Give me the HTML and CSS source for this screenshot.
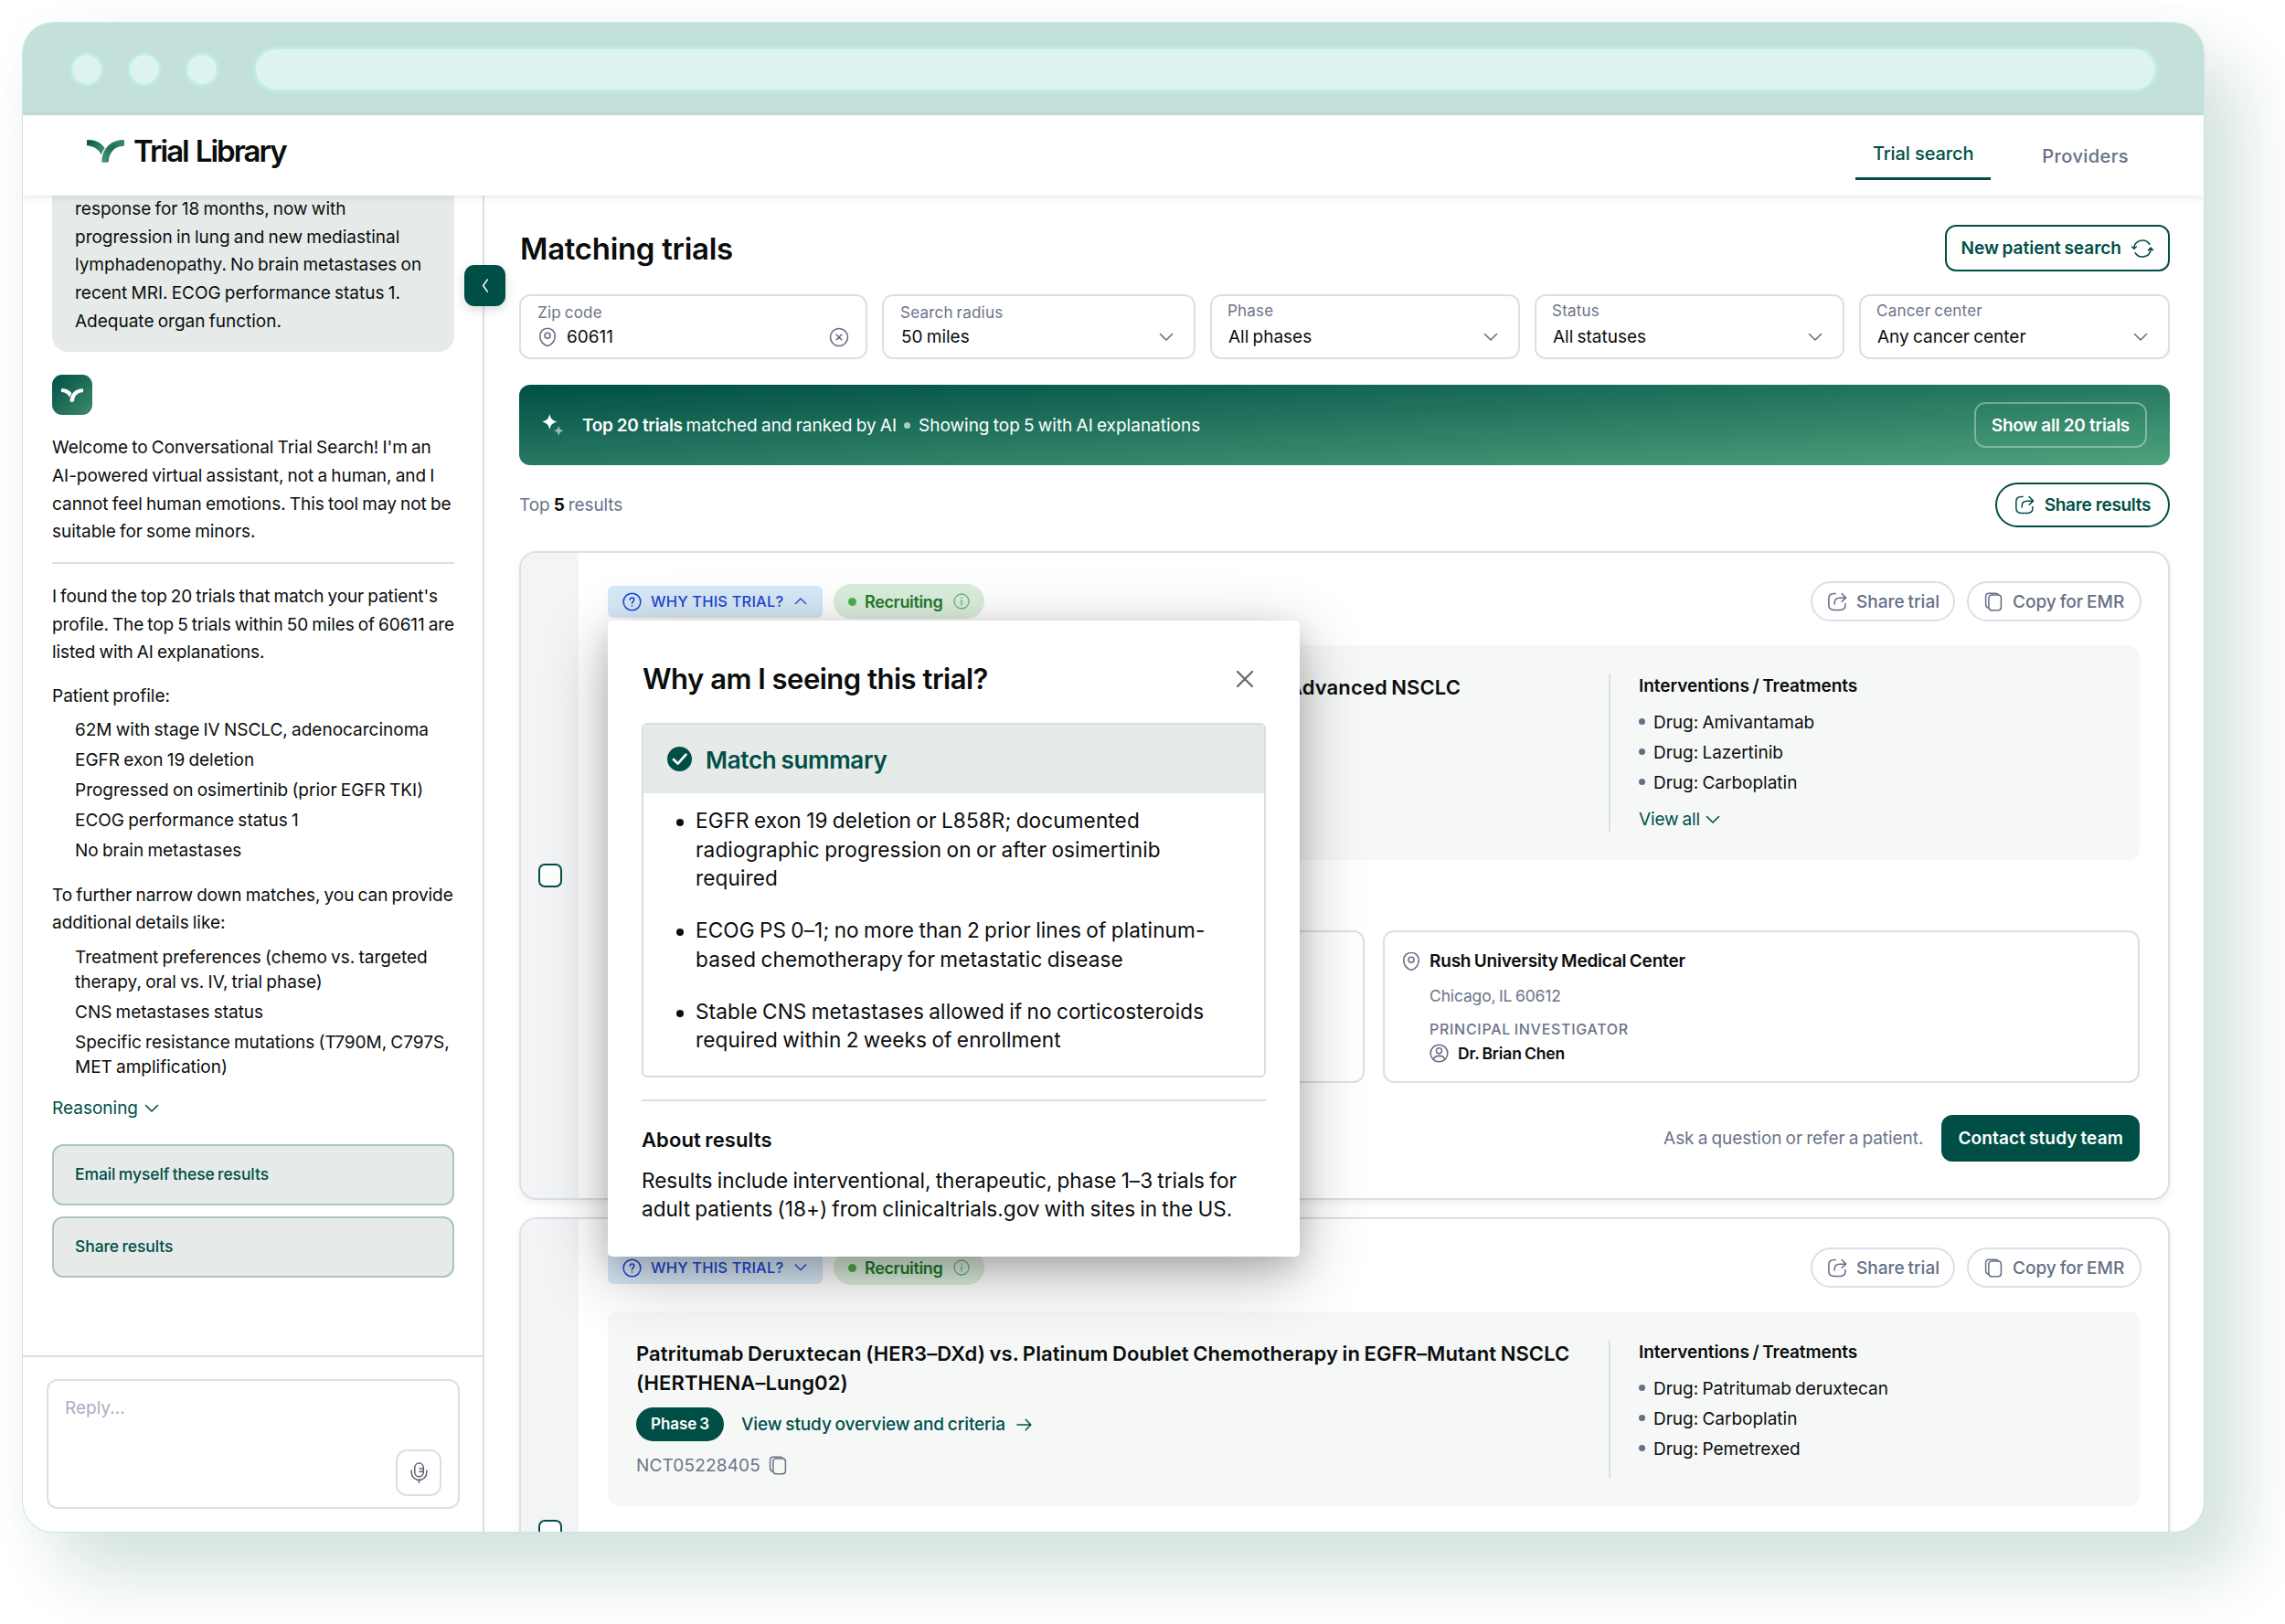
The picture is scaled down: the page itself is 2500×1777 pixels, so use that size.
FILE: index.html
```
<!DOCTYPE html>
<html lang="en">
    <head>
        <meta charset="UTF-8">
        <meta name="viewport" content="width=device-width, initial-scale=1.0">
        <title>Trial Library</title>
        <link rel="stylesheet" href="styles.css">
    </head>

    <body>
        <!-- Icon sprite -->
        <svg class="sprite" aria-hidden="true">
            <linearGradient id="leafLeft" x1="0" y1="0" x2="1" y2="1">
                <stop offset="0" stop-color="#004f46"/>
                <stop offset="1" stop-color="#4ea27c"/>
            </linearGradient>
            <linearGradient id="leafRight" x1="0" y1="1" x2="1" y2="0">
                <stop offset="0" stop-color="#4a9d78"/>
                <stop offset="0.55" stop-color="#1f6c58"/>
                <stop offset="1" stop-color="#3f8f6f"/>
            </linearGradient>
            <symbol id="leaf-a" viewBox="0 0 41 25"><path d="M1 0C9 0 16 3 19.6 9.3C18 11.5 16.6 13.8 15.6 16.4C12.8 10.4 8 7.2 1 6.6Q0 6.5 0 5.6V1Q0 0 1 0Z"/></symbol>
            <symbol id="leaf-b" viewBox="0 0 41 25"><path d="M40 0C27 0 17 9 16.3 23.6Q16.3 24.8 17.4 24.8H22.6Q23.7 24.8 23.8 23.7C24.6 13.4 30.5 7.2 40 6.8Q41 6.7 41 5.8V1Q41 0 40 0Z"/></symbol>
            <symbol id="chevron-down" viewBox="0 0 16 16"><path d="M1.5 4.5L8 11L14.5 4.5"/></symbol>
            <symbol id="chevron-up" viewBox="0 0 16 16"><path d="M1.5 11L8 4.5L14.5 11"/></symbol>
            <symbol id="chevron-left" viewBox="0 0 16 16"><path d="M10.5 1L5.5 8L10.5 15"/></symbol>
            <symbol id="pin" viewBox="0 0 20 22"><path d="M10 1.2C5.2 1.2 1.8 4.9 1.8 9.4C1.8 14 4.6 18 8.2 19.9Q10 20.9 11.8 19.9C15.4 18 18.2 14 18.2 9.4C18.2 4.9 14.8 1.2 10 1.2Z"/><circle cx="10" cy="9.2" r="3"/></symbol>
            <symbol id="clear" viewBox="0 0 22 22"><circle cx="11" cy="11" r="9.5"/><path d="M8.2 8.2L13.8 13.8M13.8 8.2L8.2 13.8"/></symbol>
            <symbol id="refresh" viewBox="0 0 24 24"><path d="M2.8 11.2A9.3 9.3 0 0 1 19.8 7.2M21.2 12.8A9.3 9.3 0 0 1 4.2 16.8M.6 10L2.8 12.2L5.4 10M18.6 13.6L21.2 11.2L23.4 13.6"/></symbol>
            <symbol id="share" viewBox="0 0 22 22"><path d="M9 1.6H7.5Q1.4 1.6 1.4 7.5V14.5Q1.4 20.4 7.5 20.4H14.5Q20.4 20.4 20.4 14.5V13M8 13.5V12.5Q8 6.5 14 6.5H20.6M16.4 1.6L21 6.4L16.4 10.8"/></symbol>
            <symbol id="copy" viewBox="0 0 20 22"><rect x="4.6" y="3.2" width="14.2" height="17.6" rx="3.4"/><path d="M4.6 18C2.4 17.7 1.2 16.4 1.2 14.2V5Q1.2 1.2 5 1.2H12.4Q15.2 1.2 15.8 3.2"/></symbol>
            <symbol id="question" viewBox="0 0 22 22"><circle cx="11" cy="11" r="9.8"/><path d="M8.6 8.6C8.6 5.4 13.4 5.5 13.4 8.6C13.4 10.6 11 10.6 11 12.9M11 15.4V15.8"/></symbol>
            <symbol id="info" viewBox="0 0 18 18"><circle cx="9" cy="9" r="8"/><path d="M9 8V13M9 5V5.6"/></symbol>
            <symbol id="user" viewBox="0 0 22 22"><circle cx="11" cy="11" r="9.8"/><circle cx="11" cy="8.2" r="3.2"/><path d="M4.8 18.2C5 12.6 17 12.6 17.2 18.2"/></symbol>
            <symbol id="mic" viewBox="0 0 20 24"><rect x="5" y="1" width="10" height="15.5" rx="5"/><path d="M1.2 9.5V11.5A8.8 8.8 0 0 0 18.8 11.5V9.5M10 20.3V23.4M15 7.2H10.6M15 10.8H10.6"/></symbol>
            <symbol id="arrow" viewBox="0 0 18 14"><path d="M1 7H16.6M10.8 1L16.8 7L10.8 13"/></symbol>
            <symbol id="close" viewBox="0 0 18 18"><path d="M1 1L17 17M17 1L1 17"/></symbol>
        </svg>

        <div class="window">
            <div class="titlebar">
                <span class="dot"></span>
                <span class="dot"></span>
                <span class="dot"></span>
                <span class="address"></span>
            </div>

            <header class="header">
                <div class="brand">
                    <svg class="brand-mark"><use href="#leaf-a" fill="url(#leafLeft)"/><use href="#leaf-b" fill="url(#leafRight)"/></svg>
                    <span>Trial Library</span>
                </div>
                <nav class="nav">
                    <a class="nav-link active">Trial search</a>
                    <a class="nav-link">Providers</a>
                </nav>
            </header>

            <div class="body">
                <aside class="sidebar">
                    <div class="chat">
                        <div class="bubble">response for 18 months, now with<br>progression in lung and new mediastinal<br>lymphadenopathy. No brain metastases on<br>recent MRI. ECOG performance status 1.<br>Adequate organ function.</div>
                        <div class="bot"><svg class="bot-mark"><use href="#leaf-a"/><use href="#leaf-b"/></svg></div>
                        <p class="welcome">Welcome to Conversational Trial Search! I'm an<br>AI-powered virtual assistant, not a human, and I<br>cannot feel human emotions. This tool may not be<br>suitable for some minors.</p>
                        <hr class="chat-rule">
                        <p class="found">I found the top 20 trials that match your patient's<br>profile. The top 5 trials within 50 miles of 60611 are<br>listed with AI explanations.</p>
                        <p class="profile">Patient profile:</p>
                        <ul class="chat-list">
                            <li>62M with stage IV NSCLC, adenocarcinoma</li>
                            <li>EGFR exon 19 deletion</li>
                            <li>Progressed on osimertinib (prior EGFR TKI)</li>
                            <li>ECOG performance status 1</li>
                            <li>No brain metastases</li>
                        </ul>
                        <p class="further">To further narrow down matches, you can provide<br>additional details like:</p>
                        <ul class="chat-list">
                            <li>Treatment preferences (chemo vs. targeted<br>therapy, oral vs. IV, trial phase)</li>
                            <li>CNS metastases status</li>
                            <li>Specific resistance mutations (T790M, C797S,<br>MET amplification)</li>
                        </ul>
                        <div class="reasoning">Reasoning <svg class="icon chev"><use href="#chevron-down"/></svg></div>
                        <button class="chat-action">Email myself these results</button>
                        <button class="chat-action">Share results</button>
                    </div>
                    <div class="composer">
                        <div class="reply">
                            <span>Reply...</span>
                            <button class="mic"><svg class="icon"><use href="#mic"/></svg></button>
                        </div>
                    </div>
                    <button class="collapse"><svg class="icon"><use href="#chevron-left"/></svg></button>
                </aside>

                <main class="main">
                    <div class="title-row">
                        <h1>Matching trials</h1>
                        <button class="btn-outline">New patient search <svg class="icon refresh"><use href="#refresh"/></svg></button>
                    </div>

                    <div class="filters">
                        <div class="filter low">
                            <label>Zip code</label>
                            <div class="filter-value"><svg class="icon pin"><use href="#pin"/></svg><span class="zip">60611</span><svg class="icon clear"><use href="#clear"/></svg></div>
                        </div>
                        <div class="filter low">
                            <label>Search radius</label>
                            <div class="filter-value"><span>50 miles</span><svg class="icon chev"><use href="#chevron-down"/></svg></div>
                        </div>
                        <div class="filter">
                            <label>Phase</label>
                            <div class="filter-value"><span>All phases</span><svg class="icon chev"><use href="#chevron-down"/></svg></div>
                        </div>
                        <div class="filter">
                            <label>Status</label>
                            <div class="filter-value"><span>All statuses</span><svg class="icon chev"><use href="#chevron-down"/></svg></div>
                        </div>
                        <div class="filter">
                            <label>Cancer center</label>
                            <div class="filter-value"><span>Any cancer center</span><svg class="icon chev"><use href="#chevron-down"/></svg></div>
                        </div>
                    </div>

                    <div class="banner">
                        <svg class="sparkle" viewBox="0 0 23 24"><path d="M8 0C9.2 5.2 10.8 6.8 16 8.2C10.8 9.6 9.2 11.2 8 16.4C6.8 11.2 5.2 9.6 0 8.2C5.2 6.8 6.8 5.2 8 0Z"/><path opacity=".55" d="M17.5 12C18.4 15.8 19.2 16.6 23 17.6C19.2 18.6 18.4 19.4 17.5 23.4C16.6 19.4 15.8 18.6 12 17.6C15.8 16.6 16.6 15.8 17.5 12Z"/></svg>
                        <b>Top 20 trials</b><span class="matched">matched and ranked by AI</span>
                        <i class="banner-dot"></i>
                        <span>Showing top 5 with AI explanations</span>
                        <button class="show-all">Show all 20 trials</button>
                    </div>

                    <div class="results-row">
                        <span>Top <b>5</b> results</span>
                        <button class="share-results"><svg class="icon share"><use href="#share"/></svg>Share results</button>
                    </div>

                    <article class="card card-first">
                        <div class="card-side"><span class="checkbox"></span></div>
                        <div class="card-content">
                            <div class="card-top">
                                <span class="why"><svg class="icon q"><use href="#question"/></svg>WHY THIS TRIAL?<svg class="icon c"><use href="#chevron-up"/></svg></span>
                                <span class="status"><i></i>Recruiting<svg class="icon"><use href="#info"/></svg></span>
                                <button class="pill pill-share"><svg class="icon share"><use href="#share"/></svg>Share trial</button>
                                <button class="pill pill-copy"><svg class="icon copy"><use href="#copy"/></svg>Copy for EMR</button>
                            </div>
                            <div class="detail">
                                <div class="study">
                                    <h2 class="align-end">Advanced NSCLC</h2>
                                </div>
                                <div class="drugs">
                                    <h3>Interventions / Treatments</h3>
                                    <ul>
                                        <li>Drug: Amivantamab</li>
                                        <li>Drug: Lazertinib</li>
                                        <li>Drug: Carboplatin</li>
                                    </ul>
                                    <div class="view-all">View all <svg class="icon chev"><use href="#chevron-down"/></svg></div>
                                </div>
                            </div>
                            <div class="sites">
                                <div class="site"></div>
                                <div class="site">
                                    <svg class="icon pin"><use href="#pin"/></svg>
                                    <div>
                                        <div class="site-name">Rush University Medical Center</div>
                                        <div class="site-city">Chicago, IL 60612</div>
                                        <div class="site-role">PRINCIPAL INVESTIGATOR</div>
                                        <div class="site-person"><svg class="icon"><use href="#user"/></svg>Dr. Brian Chen</div>
                                    </div>
                                </div>
                            </div>
                            <div class="contact-row">
                                <span>Ask a question or refer a patient.</span>
                                <button class="contact">Contact study team</button>
                            </div>
                        </div>
                    </article>

                    <article class="card card-second">
                        <div class="card-side"><span class="checkbox"></span></div>
                        <div class="card-content">
                            <div class="card-top">
                                <span class="why"><svg class="icon q"><use href="#question"/></svg>WHY THIS TRIAL?<svg class="icon c"><use href="#chevron-down"/></svg></span>
                                <span class="status"><i></i>Recruiting<svg class="icon"><use href="#info"/></svg></span>
                                <button class="pill pill-share"><svg class="icon share"><use href="#share"/></svg>Share trial</button>
                                <button class="pill pill-copy"><svg class="icon copy"><use href="#copy"/></svg>Copy for EMR</button>
                            </div>
                            <div class="detail">
                                <div class="study">
                                    <h2>Patritumab Deruxtecan (HER3–DXd) vs. Platinum Doublet Chemotherapy in EGFR–Mutant NSCLC<br>(HERTHENA–Lung02)</h2>
                                    <div class="phase-row">
                                        <span class="phase">Phase 3</span>
                                        <a>View study overview and criteria</a>
                                        <svg class="icon arrow"><use href="#arrow"/></svg>
                                    </div>
                                    <div class="nct">NCT05228405<svg class="icon copy"><use href="#copy"/></svg></div>
                                </div>
                                <div class="drugs">
                                    <h3>Interventions / Treatments</h3>
                                    <ul>
                                        <li>Drug: Patritumab deruxtecan</li>
                                        <li>Drug: Carboplatin</li>
                                        <li>Drug: Pemetrexed</li>
                                    </ul>
                                </div>
                            </div>
                        </div>
                    </article>
                </main>
            </div>

            <!-- Popover opened from the first card -->
            <div class="popover">
                <div class="popover-head">
                    <h2>Why am I seeing this trial?</h2>
                    <svg class="icon close"><use href="#close"/></svg>
                </div>
                <div class="summary">
                    <div class="summary-head">
                        <svg class="check" viewBox="0 0 27 27"><circle cx="13.5" cy="13.5" r="13.5"/><path d="M7 14L11.6 18.6L20.5 8.6"/></svg>
                        Match summary
                    </div>
                    <ul>
                        <li>EGFR exon 19 deletion or L858R; documented<br>radiographic progression on or after osimertinib<br>required</li>
                        <li>ECOG PS 0–1; no more than 2 prior lines of platinum-<br>based chemotherapy for metastatic disease</li>
                        <li>Stable CNS metastases allowed if no corticosteroids<br>required within 2 weeks of enrollment</li>
                    </ul>
                </div>
                <hr>
                <h3>About results</h3>
                <p>Results include interventional, therapeutic, phase 1–3 trials for<br>adult patients (18+) from clinicaltrials.gov with sites in the US.</p>
            </div>
        </div>
    </body>
</html>
```
FILE: styles.css
```
* {
    box-sizing: border-box;
    margin: 0;
    padding: 0;
}
body {
    width: 2500px;
    height: 1777px;
    overflow: hidden;
    padding: 25px;
    background-color: #fff;
    font-family: Inter, "Open Sans", sans-serif;
    font-size: 19px;
    word-spacing: -0.06em;
    color: #0b0d0d;
    white-space: nowrap;
}
button {
    font: inherit;
    color: inherit;
    word-spacing: inherit;
    background: none;
    border: none;
    display: flex;
    align-items: center;
    flex-shrink: 0;
}
ul {
    list-style: none;
}
svg {
    display: block;
    flex-shrink: 0;
}
.sprite {
    position: absolute;
    width: 0;
    height: 0;
}
.icon {
    fill: none;
    stroke: currentColor;
    stroke-width: 1.6;
    stroke-linecap: round;
    stroke-linejoin: round;
}
.chev {
    width: 16px;
    height: 16px;
}
.pin {
    width: 20px;
    height: 22px;
}
.window {
    position: relative;
    width: 2386px;
    height: 1651px;
    border-radius: 33px;
    overflow: hidden;
    background-color: #fff;
    display: flex;
    flex-direction: column;
    box-shadow: 0 0 0 1px #cfe4de, 40px 45px 75px #d2e2dd, 0 0 40px rgba(0, 60, 50, 0.03);
}

/* Browser bar */
.titlebar {
    height: 101px;
    flex-shrink: 0;
    background-color: #c4e0da;
    display: flex;
    align-items: center;
    gap: 25px;
    padding: 0 50px 0 51px;
}
.dot {
    width: 38px;
    height: 38px;
    border-radius: 50%;
    background-color: #dcf3ef;
    border: 3px solid #bfeddb;
}
.address {
    flex: 1;
    height: 50px;
    margin-left: 12px;
    border-radius: 25px;
    background-color: #dcf3ef;
    border: 3px solid #bfeddb;
}

/* Header */
.header {
    height: 88px;
    flex-shrink: 0;
    padding: 0 50px 0 70px;
    display: flex;
    justify-content: space-between;
    background-color: #fff;
    box-shadow: 0 1px 8px rgba(0, 0, 0, 0.12);
    z-index: 2;
}
.brand {
    display: flex;
    align-items: center;
    gap: 10px;
    height: 78px;
    font-size: 33px;
    font-weight: 600;
    letter-spacing: -1.95px;
    word-spacing: 1.5px;
}
.brand-mark {
    width: 41px;
    height: 25px;
}
.nav {
    display: flex;
    font-size: 20px;
    font-weight: 500;
    color: #666f85;
}
.nav-link {
    height: 74px;
    line-height: 90px;
    padding: 0 32px;
    letter-spacing: 0.4px;
}
.nav-link.active {
    height: 71px;
    line-height: 85px;
    padding: 0 19px;
    margin-right: 24px;
    color: #004f46;
    letter-spacing: -0.1px;
    word-spacing: 0;
    border-bottom: 3px solid #004f46;
}
.body {
    flex: 1;
    min-height: 0;
    display: flex;
}

/* Sidebar */
.sidebar {
    position: relative;
    width: 505px;
    flex-shrink: 0;
    border-right: 2px solid #dcdfe5;
    display: flex;
    flex-direction: column;
    line-height: 30.67px;
}
.chat {
    flex: 1;
    padding: 0 31px 0 32px;
}
.bubble {
    background-color: #e6ebea;
    border-radius: 0 0 17px 17px;
    padding: 0 25px 18px;
}
.bot {
    width: 44px;
    height: 44px;
    margin: 25px 0 21px;
    border-radius: 11px;
    background: linear-gradient(135deg, #004f46, #3c8b6b);
    display: flex;
    align-items: center;
    justify-content: center;
}
.bot-mark {
    width: 24px;
    height: 15px;
    fill: #fff;
}
.welcome,
.further {
    letter-spacing: -0.04px;
}
.chat-rule {
    border: none;
    height: 2px;
    background-color: #dcdfe5;
    margin: 17px 0 21px;
}
.found {
    letter-spacing: -0.1px;
}
.profile {
    margin-top: 17px;
}
.chat-list {
    display: flex;
    flex-direction: column;
    gap: 6px;
    line-height: 27px;
    margin: 7px 0 21px;
    padding-left: 25px;
}
.further + .chat-list {
    margin-top: 8px;
}
.reasoning {
    display: flex;
    align-items: center;
    gap: 7px;
    color: #004f46;
    margin: -4px 0 23px;
}
.chat-action {
    width: 100%;
    height: 67px;
    margin-bottom: 12px;
    padding: 0 23px;
    border: 2px solid #a9c6c1;
    border-radius: 12px;
    background-color: #e6ebea;
    color: #004f46;
    font-size: 17.5px;
    font-weight: 500;
    letter-spacing: -0.1px;
}
.composer {
    height: 193px;
    border-top: 2px solid #dcdfe5;
    padding: 24px 25px 0 26px;
}
.reply {
    height: 142px;
    border: 2px solid #dcdfe5;
    border-radius: 12px;
    padding: 15px 18px 12px;
    color: #a9b0bf;
    display: flex;
    justify-content: space-between;
}
.mic {
    width: 50px;
    height: 51px;
    border: 2px solid #dcdfe5;
    border-radius: 12px;
    align-self: flex-end;
    justify-content: center;
    color: #5b6478;
}
.mic .icon {
    width: 19px;
    height: 23px;
}
.collapse {
    position: absolute;
    top: 76px;
    right: -25px;
    width: 45px;
    height: 45px;
    border-radius: 11px;
    background-color: #004f46;
    color: #fff;
    justify-content: center;
    box-shadow: 0 4px 12px rgba(0, 0, 0, 0.15);
}
.collapse .icon {
    width: 16px;
    height: 15px;
}

/* Main column */
.main {
    flex: 1;
    min-width: 0;
    padding: 32px 37px 0 38px;
}
.title-row {
    display: flex;
    justify-content: space-between;
    align-items: center;
}
h1 {
    font-size: 33px;
    font-weight: 600;
    letter-spacing: -0.3px;
    word-spacing: 0;
    padding-left: 1px;
}
.btn-outline {
    height: 51px;
    border: 2px solid #004f46;
    border-radius: 12px;
    padding: 0 16px;
    gap: 11px;
    color: #004f46;
    font-weight: 600;
}
.refresh {
    width: 24px;
    height: 24px;
}
.filters {
    display: grid;
    grid-template-columns: 381px 343px 339px 339px 340px;
    justify-content: space-between;
    margin-top: 25px;
}
.filter {
    height: 71px;
    border: 2px solid #dcdfe7;
    border-radius: 12px;
    padding: 5px 18px 0 17px;
}
.filter label {
    display: block;
    font-size: 17px;
    line-height: 23px;
    letter-spacing: 0.22px;
    color: #6b7489;
}
.filter.low {
    padding-left: 18px;
}
.filter.low label {
    padding-top: 2px;
}
.filter.low .filter-value {
    margin-top: 2px;
}
.filter-value {
    display: flex;
    align-items: center;
    justify-content: space-between;
    height: 25px;
    margin-top: 4px;
    padding-left: 1px;
}
.filter-value .icon {
    color: #666f85;
}
.filter-value .chev {
    margin-right: 4px;
}
.filter-value .clear {
    width: 22px;
    height: 22px;
}
.zip {
    flex: 1;
    padding-left: 11px;
}
.banner {
    height: 88px;
    margin-top: 28px;
    padding: 0 25px 0 25px;
    border-radius: 12px;
    background: linear-gradient(to bottom right, #004f46, #4ea27c);
    color: #fff;
    display: flex;
    align-items: center;
}
.sparkle {
    width: 24px;
    height: 25px;
    fill: #fff;
    margin-right: 20px;
}
.banner b {
    font-weight: 600;
    letter-spacing: -0.35px;
    word-spacing: 0;
}
.matched {
    margin-left: 4px;
}
.banner-dot {
    width: 7px;
    height: 7px;
    border-radius: 50%;
    background-color: #a9cdbf;
    margin: 0 9px 0 8px;
}
.show-all {
    height: 50px;
    margin-left: auto;
    padding: 0 17px;
    border: 2px solid rgba(255, 255, 255, 0.35);
    border-radius: 12px;
    font-weight: 600;
    letter-spacing: -0.3px;
    word-spacing: 0;
}
.results-row {
    display: flex;
    align-items: center;
    justify-content: space-between;
    margin-top: 19px;
    color: #6b7489;
    letter-spacing: -0.1px;
}
.results-row b {
    color: #0b0d0d;
    font-weight: 700;
}
.share {
    width: 22px;
    height: 21px;
}
.share-results {
    height: 49px;
    border: 2px solid #004f46;
    border-radius: 25px;
    padding: 0 19px;
    gap: 11px;
    color: #004f46;
    font-weight: 600;
    letter-spacing: -0.35px;
    word-spacing: 0;
}

/* Trial cards */
.card {
    display: flex;
    border: 2px solid #dcdfe7;
    border-radius: 19px;
    overflow: hidden;
    background-color: #fff;
    box-shadow: 0 3px 8px rgba(20, 30, 60, 0.07);
}
.card-first {
    height: 710px;
    margin-top: 26px;
}
.card-second {
    height: 688px;
    margin-top: 19px;
}
.card-side {
    width: 63px;
    background-color: #f2f4f6;
    display: flex;
    align-items: center;
    justify-content: center;
}
.checkbox {
    width: 26px;
    height: 26px;
    border: 2px solid #004f46;
    border-radius: 7px;
    background-color: #fff;
}
.card-content {
    flex: 1;
    padding: 31px 31px 0 32px;
}
.card-top {
    display: flex;
    align-items: center;
    height: 44px;
}
.why {
    display: flex;
    align-items: center;
    width: 235px;
    height: 35px;
    padding-left: 16px;
    border-radius: 6px;
    background-color: #d7e8f6;
    color: #1c45d8;
    font-size: 16.5px;
    font-weight: 500;
    letter-spacing: 0.15px;
    word-spacing: 0;
}
.why .q {
    width: 21px;
    height: 21px;
    margin-right: 10px;
}
.why .c {
    width: 14px;
    height: 14px;
    margin-left: 12px;
}
.status {
    display: flex;
    align-items: center;
    width: 165px;
    height: 38px;
    margin-left: 12px;
    padding-left: 16px;
    border-radius: 19px;
    background-color: #dbeedd;
    color: #1f7a2b;
    font-size: 18px;
    font-weight: 600;
    letter-spacing: -0.35px;
}
.status i {
    width: 9px;
    height: 9px;
    border-radius: 50%;
    background-color: #4caf50;
    margin-right: 9px;
}
.status .icon {
    width: 18px;
    height: 18px;
    margin-left: 12px;
    stroke-width: 1.3;
    color: #71b078;
}
.pill {
    height: 44px;
    border: 2px solid #dcdfe7;
    border-radius: 22px;
    color: #666f85;
    font-weight: 500;
    letter-spacing: 0;
    gap: 10px;
    padding-left: 16px;
}
.pill-share {
    width: 158px;
    margin-left: auto;
}
.pill-copy {
    width: 191px;
    margin-left: 13px;
    margin-right: -2px;
    padding-left: 17px;
    gap: 11px;
}
.copy {
    width: 20px;
    height: 21px;
}
.detail {
    display: flex;
    margin-top: 26px;
    padding: 31px;
    border-radius: 12px;
    background-color: #f6f8f7;
}
.study {
    flex: 1;
}
.study h2 {
    font-size: 22px;
    font-weight: 600;
    line-height: 31.7px;
    letter-spacing: 0.1px;
}
.align-end {
    text-align: right;
    padding-right: 162px;
}
.phase-row {
    display: flex;
    align-items: center;
    margin-top: 11px;
    color: #004f46;
    font-weight: 500;
    letter-spacing: -0.1px;
}
.phase {
    width: 96px;
    height: 37px;
    line-height: 37px;
    border-radius: 19px;
    margin-right: 19px;
    background-color: #004f46;
    color: #fff;
    font-size: 17px;
    font-weight: 600;
    text-align: center;
}
.arrow {
    width: 17px;
    height: 14px;
    margin-left: 12px;
}
.nct {
    display: flex;
    align-items: center;
    gap: 9px;
    height: 27px;
    margin-top: 13px;
    color: #6b7489;
    letter-spacing: 0.17px;
}
.drugs {
    width: 550px;
    margin-top: 1px;
    padding-left: 31px;
    border-left: 2px solid #dcdfe5;
    line-height: 27px;
}
.drugs h3 {
    font-size: 19px;
    font-weight: 600;
    letter-spacing: -0.05px;
    margin-top: -1px;
}
.drugs ul {
    margin-top: 13px;
    display: flex;
    flex-direction: column;
    gap: 6.2px;
}
.drugs li {
    display: flex;
    align-items: center;
    gap: 9px;
}
.drugs li::before {
    content: "";
    width: 7px;
    height: 7px;
    margin-top: -3px;
    border-radius: 50%;
    background-color: #666f85;
}
.view-all {
    display: flex;
    align-items: center;
    gap: 6px;
    margin-top: 13px;
    color: #004f46;
    letter-spacing: -0.15px;
}
.sites {
    display: grid;
    grid-template-columns: 1fr 1fr;
    gap: 20px;
    margin-top: 77px;
}
.site {
    height: 167px;
    border: 2px solid #dcdfe7;
    border-radius: 12px;
    padding: 18px 19px;
    display: flex;
    gap: 10px;
}
.site .pin {
    margin-top: 3px;
    color: #666f85;
}
.site-name {
    font-weight: 600;
    line-height: 27px;
    letter-spacing: -0.2px;
}
.site-city {
    margin-top: 13px;
    font-size: 17.5px;
    line-height: 24px;
    letter-spacing: -0.15px;
    color: #6b7489;
}
.site-role {
    margin-top: 13px;
    font-size: 16px;
    font-weight: 500;
    line-height: 22px;
    letter-spacing: 0.7px;
    color: #6b7489;
}
.site-person {
    display: flex;
    align-items: center;
    gap: 10px;
    margin-top: 3px;
    font-size: 17.5px;
    font-weight: 600;
    line-height: 25px;
    letter-spacing: -0.13px;
}
.site-person .icon {
    width: 21px;
    height: 21px;
    color: #666f85;
}
.contact-row {
    display: flex;
    align-items: center;
    justify-content: flex-end;
    gap: 20px;
    margin-top: 35px;
    color: #6b7489;
    letter-spacing: -0.05px;
}
.contact {
    height: 51px;
    padding: 0 18px;
    border-radius: 12px;
    background-color: #004f46;
    color: #fff;
    font-weight: 600;
    letter-spacing: 0.15px;
}

/* Popover */
.popover {
    position: absolute;
    top: 654px;
    left: 640px;
    width: 757px;
    height: 696px;
    padding: 43px 37px 0;
    border-radius: 5px;
    background-color: #fff;
    box-shadow: 0 20px 70px rgba(0, 0, 0, 0.3), 0 10px 28px rgba(0, 0, 0, 0.12);
    font-size: 22.6px;
    line-height: 31.7px;
    letter-spacing: 0.1px;
    z-index: 5;
}
.popover-head {
    display: flex;
    justify-content: space-between;
    align-items: center;
    height: 41px;
    padding: 0 14px 0 1px;
}
.popover-head h2 {
    font-size: 31px;
    font-weight: 600;
    letter-spacing: -0.5px;
    word-spacing: 0;
}
.close {
    width: 18px;
    height: 18px;
    stroke-width: 2.2;
    color: #666;
}
.summary {
    height: 388px;
    margin-top: 28px;
    border: 2px solid #dcdede;
    border-radius: 6px;
}
.summary-head {
    height: 75px;
    padding: 3px 0 0 26px;
    display: flex;
    align-items: center;
    gap: 15px;
    background-color: #e6ebea;
    color: #004f46;
    font-size: 26px;
    font-weight: 600;
    letter-spacing: -0.3px;
}
.check {
    width: 27px;
    height: 27px;
    margin-top: -4px;
    fill: #004f46;
}
.check path {
    fill: none;
    stroke: #fff;
    stroke-width: 2.6;
    stroke-linecap: round;
    stroke-linejoin: round;
}
.summary ul {
    padding: 14px 0 0 57px;
}
.summary li {
    position: relative;
    margin-bottom: 25px;
}
.summary li::before {
    content: "";
    position: absolute;
    left: -21px;
    top: 14px;
    width: 8px;
    height: 8px;
    border-radius: 50%;
    background-color: #0b0d0d;
}
.popover hr {
    border: none;
    height: 2px;
    background-color: #dcdede;
    margin: 24px 0 27px;
}
.popover h3 {
    font-size: 22px;
    font-weight: 600;
    margin-bottom: 12px;
}
.popover p {
    letter-spacing: -0.01px;
}
```
